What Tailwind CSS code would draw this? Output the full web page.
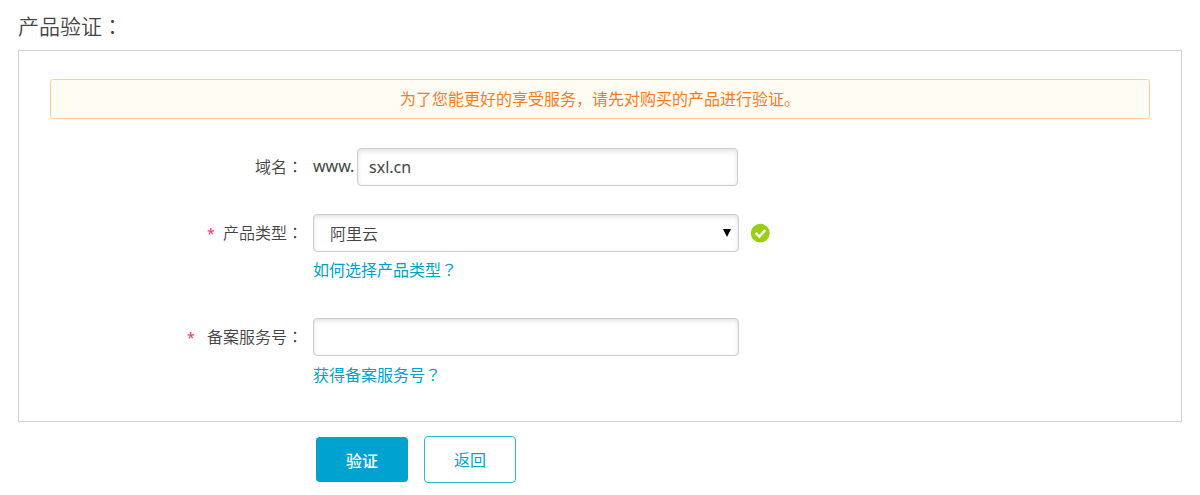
<!DOCTYPE html>
<html lang="zh-CN">
<head>
    <meta charset="UTF-8">
    <meta name="viewport" content="width=device-width, initial-scale=1.0">
    <title>产品验证</title>
    <script src="https://cdn.jsdelivr.net/npm/@tailwindcss/browser@4"></script>
</head>
<body class="bg-white px-[18px] pt-[10px] pb-3 font-['Noto_Sans','Noto_Sans_CJK_SC',sans-serif] text-base text-[#444]">
    <h1 class="text-[21px] leading-[30px] font-[350]">产品验证<span lang="ja" class="font-['Noto_Sans_CJK_JP',sans-serif]">&#65306;</span></h1>

    <form id="verify-form">
        <div class="mt-[9px] border border-[#d0d0d0] px-[31px] pt-7 pb-[34px]">
            <p class="rounded-[3px] border border-[#fdcb9c] bg-[#fffcf4] text-center leading-[38px] text-[#ff7a1c]">为了您能更好的享受服务&#65292;请先对购买的产品进行验证。</p>

            <!-- Domain -->
            <div class="mt-[29px] flex gap-[10px]">
                <label for="domain" class="w-[253px] shrink-0 text-right leading-9 font-[350]">域名<span lang="ja" class="font-['Noto_Sans_CJK_JP',sans-serif]">&#65306;</span></label>
                <div class="flex w-[425px]">
                    <span class="w-11 shrink-0 leading-9">www.</span>
                    <input id="domain" type="text" value="sxl.cn" class="h-[38px] min-w-0 flex-1 rounded border border-[#ccc] bg-white px-[11px] shadow-[inset_0_2px_5px_rgba(0,0,0,0.12)]">
                </div>
            </div>

            <!-- Product type -->
            <div class="mt-7 flex gap-[10px]">
                <label for="product-type" class="w-[253px] shrink-0 text-right leading-9 font-[350]"><span class="mr-1 text-sm font-normal text-[#ff2d78]">*</span> 产品类型<span lang="ja" class="font-['Noto_Sans_CJK_JP',sans-serif]">&#65306;</span></label>
                <div>
                    <div class="flex items-center gap-3">
                        <div class="relative w-[426px]">
                            <select id="product-type" class="block h-[38px] w-full appearance-none rounded border border-[#ccc] bg-white pt-[2px] pl-4 font-[350] shadow-[inset_0_2px_5px_rgba(0,0,0,0.12)]">
                                <option>阿里云</option>
                            </select>
                            <svg class="pointer-events-none absolute top-[15px] right-2 h-2 w-2" viewBox="0 0 8 8" fill="#000"><path d="M0 0h8L4 8z"/></svg>
                        </div>
                        <svg class="h-5 w-5" viewBox="0 0 20 20">
                            <circle cx="9.3" cy="10.2" r="9.4" fill="#9acd14"/>
                            <path d="M4.6 9.8l3.7 3.8 6-6.6" fill="none" stroke="#fff" stroke-width="2.4"/>
                        </svg>
                    </div>
                    <a href="#" class="mt-[5px] block leading-6 text-[#00a2ca]">如何选择产品类型<span lang="ja" class="font-['Noto_Sans_CJK_JP',sans-serif]">&#65311;</span></a>
                </div>
            </div>

            <!-- Service number -->
            <div class="mt-9 flex gap-[10px]">
                <label for="service-no" class="w-[253px] shrink-0 text-right leading-9 font-[350]"><span class="mr-2 text-sm font-normal text-[#ff2d78]">*</span> 备案服务号<span lang="ja" class="font-['Noto_Sans_CJK_JP',sans-serif]">&#65306;</span></label>
                <div>
                    <input id="service-no" type="text" class="block h-[38px] w-[426px] rounded border border-[#ccc] bg-white px-[11px] shadow-[inset_0_2px_5px_rgba(0,0,0,0.12)]">
                    <a href="#" class="mt-[6px] block leading-6 text-[#00a2ca]">获得备案服务号<span lang="ja" class="font-['Noto_Sans_CJK_JP',sans-serif]">&#65311;</span></a>
                </div>
            </div>
        </div>

        <div class="mt-[14px] flex items-center gap-4 pl-[298px]">
            <button type="submit" class="h-[45px] w-[92px] rounded bg-[#00a2d0] pt-[2px] font-medium text-white">验证</button>
            <button type="button" class="h-[47px] w-[92px] rounded border border-[#2fb5d8] bg-white text-[#00a2d0]">返回</button>
        </div>
    </form>
</body>
</html>
